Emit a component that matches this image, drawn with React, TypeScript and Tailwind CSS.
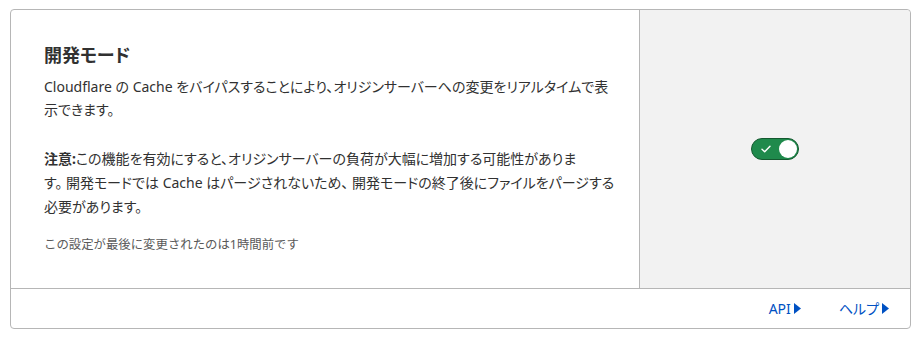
const font = { fontFamily: '"Noto Sans", "Noto Sans CJK JP", sans-serif' };

function Toggle() {
  return (
    <button
      type="button"
      role="switch"
      aria-checked="true"
      className="flex h-[22px] w-[48px] items-center justify-between rounded-full border border-[#14592f] bg-[#1f8a4c] pl-[9px] pr-[1px]"
    >
      <svg width="10" height="8" viewBox="0 0 10 8" fill="none">
        <path d="M1 4.2 L3.7 6.8 L9 1.2" stroke="#ffffff" strokeWidth="1.4" strokeLinecap="round" strokeLinejoin="round" />
      </svg>
      <span className="h-[18px] w-[18px] rounded-full bg-white" />
    </button>
  );
}

function Caret() {
  return (
    <svg width="7" height="11" viewBox="0 0 7 11" className="ml-[3px]">
      <path d="M0 0 L7 5.5 L0 11 Z" fill="#0051c3" />
    </svg>
  );
}

export default function App() {
  return (
    <div className="min-h-screen bg-white pl-[10px] pt-[9px] [font-feature-settings:'palt']" style={font}>
      <div className="flex h-[320px] w-[901px] flex-col rounded-[4px] border border-[#b6b6b6] bg-white text-[#313131]">
        {/* Main */}
        <div className="flex flex-1">
          <div className="w-[629px] border-r border-[#b6b6b6] pl-[33px] pr-[10px] pt-[32px]">
            <h2 className="text-[18px] font-bold leading-[26px]">開発モード</h2>
            <p className="mt-[7px] text-[14px] leading-[23px]">
              Cloudflare の Cache をバイパスすることにより、オリジンサーバーへの変更をリアルタイムで表<br />
              示できます。
            </p>
            <p className="mt-[26px] text-[14px] leading-[24px]">
              <span className="font-bold">注意:</span>この機能を有効にすると、オリジンサーバーの負荷が大幅に増加する可能性がありま<br />
              す。 開発モードでは Cache はパージされないため、 開発モードの終了後にファイルをパージする<br />
              必要があります。
            </p>
            <p className="mt-[17px] text-[12.4px] leading-[18px] text-[#595959] [font-feature-settings:normal]">
              この設定が最後に変更されたのは1時間前です
            </p>
          </div>
          <div className="flex flex-1 items-center justify-center rounded-tr-[4px] bg-[#f2f2f2]">
            <Toggle />
          </div>
        </div>
        {/* Footer */}
        <div className="flex h-[40px] items-center justify-end gap-[38px] border-t border-[#b6b6b6] pr-[21px] text-[14px] text-[#0051c3]">
          <a className="flex items-center">API<Caret /></a>
          <a className="flex items-center">ヘルプ<Caret /></a>
        </div>
      </div>
    </div>
  );
}
